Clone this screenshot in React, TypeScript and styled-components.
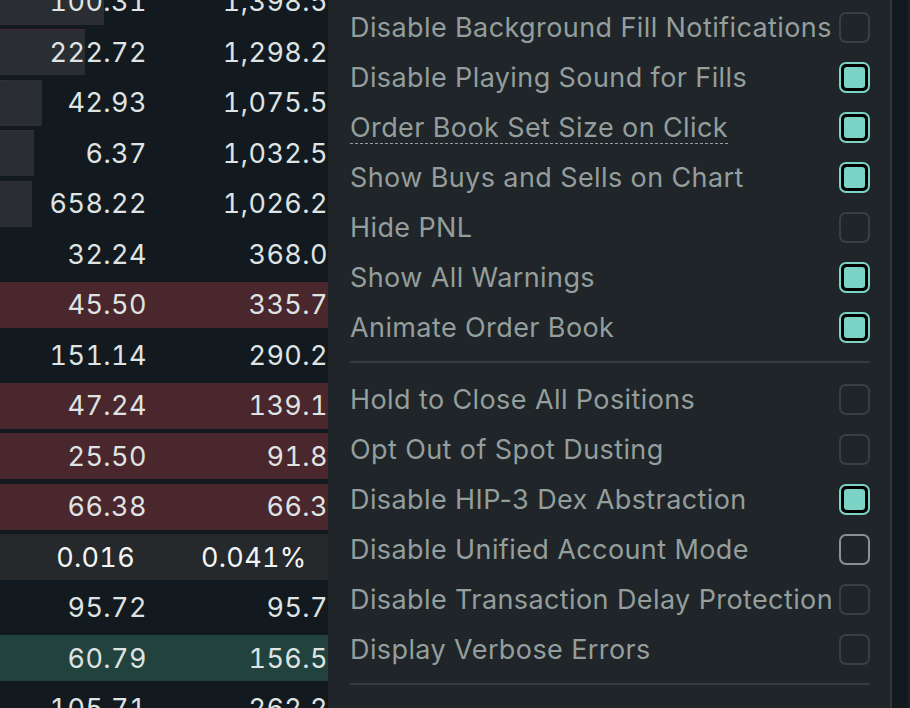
import styled, { createGlobalStyle } from 'styled-components';

const GlobalStyle = createGlobalStyle`
    html, body {
        margin: 0;
        padding: 0;
        background-color: #121a1f;
    }
    #root {
        height: 708px;
        overflow: hidden;
    }
`;

type Side = 'ask' | 'bid' | 'plain';

interface BookRow {
    price: string;
    size: string;
    side: Side;
    depth?: number;
}

const rows: BookRow[] = [
    { price: '100.31', size: '1,398.5', side: 'plain', depth: 104 },
    { price: '222.72', size: '1,298.2', side: 'plain', depth: 85 },
    { price: '42.93', size: '1,075.5', side: 'plain', depth: 42 },
    { price: '6.37', size: '1,032.5', side: 'plain', depth: 34 },
    { price: '658.22', size: '1,026.2', side: 'plain', depth: 32 },
    { price: '32.24', size: '368.0', side: 'plain' },
    { price: '45.50', size: '335.7', side: 'ask' },
    { price: '151.14', size: '290.2', side: 'plain' },
    { price: '47.24', size: '139.1', side: 'ask' },
    { price: '25.50', size: '91.8', side: 'ask' },
    { price: '66.38', size: '66.3', side: 'ask' },
];

const bidRows: BookRow[] = [
    { price: '95.72', size: '95.7', side: 'plain' },
    { price: '60.79', size: '156.5', side: 'bid' },
    { price: '105.71', size: '262.2', side: 'plain' },
];

interface Setting {
    label: string;
    checked: boolean;
    dotted?: boolean;
    focused?: boolean;
}

const displaySettings: Setting[] = [
    { label: 'Disable Background Fill Notifications', checked: false },
    { label: 'Disable Playing Sound for Fills', checked: true },
    { label: 'Order Book Set Size on Click', checked: true, dotted: true },
    { label: 'Show Buys and Sells on Chart', checked: true },
    { label: 'Hide PNL', checked: false },
    { label: 'Show All Warnings', checked: true },
    { label: 'Animate Order Book', checked: true },
];

const accountSettings: Setting[] = [
    { label: 'Hold to Close All Positions', checked: false },
    { label: 'Opt Out of Spot Dusting', checked: false },
    { label: 'Disable HIP-3 Dex Abstraction', checked: true },
    { label: 'Disable Unified Account Mode', checked: false, focused: true },
    { label: 'Disable Transaction Delay Protection', checked: false },
    { label: 'Display Verbose Errors', checked: false },
];

const BookLine = ({ row }: { row: BookRow }) => (
    <Row>
        <RowFill $side={row.side}>
            {row.depth ? <DepthBar style={{ width: row.depth }} /> : null}
        </RowFill>
        <Price>{row.price}</Price>
        <Size>{row.size}</Size>
    </Row>
);

const SettingRow = ({ item }: { item: Setting }) => (
    <OptionRow>
        <Label $dotted={item.dotted}>{item.label}</Label>
        <Box $checked={item.checked} $focused={item.focused}>
            {item.checked ? <Tick /> : null}
        </Box>
    </OptionRow>
);

const App = () => {
    return (
        <>
            <GlobalStyle />
            <Page>
                <OrderBook>
                    {rows.map((r) => <BookLine key={r.price} row={r} />)}
                    <SpreadRow>
                        <SpreadPrice>0.016</SpreadPrice>
                        <SpreadPercent>0.041%</SpreadPercent>
                    </SpreadRow>
                    {bidRows.map((r) => <BookLine key={r.price} row={r} />)}
                </OrderBook>
                <Panel>
                    {displaySettings.map((s) => <SettingRow key={s.label} item={s} />)}
                    <Divider />
                    {accountSettings.map((s) => <SettingRow key={s.label} item={s} />)}
                    <Divider />
                </Panel>
                <ScrollTrack />
            </Page>
        </>
    );
};

const Page = styled.div`
    display: flex;
    width: 910px;
    height: 708px;
    overflow: hidden;
    background-color: #121a1f;
    font-family: Inter, "Liberation Sans", sans-serif;
`;

const OrderBook = styled.div`
    width: 328px;
    flex-shrink: 0;
    display: flex;
    flex-direction: column;
    margin-top: -23.75px;
    overflow: hidden;
`;

const Row = styled.div`
    position: relative;
    height: 50.5px;
    flex-shrink: 0;
    display: flex;
    align-items: center;
    font-size: 27px;
    font-feature-settings: "tnum";
    letter-spacing: 0.45px;
    color: #dfe3e3;
`;

const fills: Record<Side, string> = {
    ask: '#4a262d',
    bid: '#22433d',
    plain: 'transparent',
};

const RowFill = styled.div<{ $side: Side }>`
    position: absolute;
    left: 0;
    right: 0;
    top: 2.25px;
    bottom: 2.25px;
    background-color: ${(p) => fills[p.$side]};
`;

const DepthBar = styled.div`
    height: 100%;
    background-color: #2a2e33;
    border-top: 1px dotted #4a2a30;
    box-sizing: border-box;
`;

const Price = styled.span`
    position: relative;
    width: 147px;
    text-align: right;
`;

const Size = styled.span`
    position: relative;
    width: 181px;
    text-align: right;
    white-space: nowrap;
`;

const SpreadRow = styled.div`
    height: 50.5px;
    flex-shrink: 0;
    display: flex;
    align-items: center;
    box-sizing: border-box;
    padding: 2.25px 0;
    background-clip: content-box;
    background-color: #25292c;
    font-size: 27px;
    font-feature-settings: "tnum";
    letter-spacing: 0.3px;
    color: #f4f6f6;
`;

const SpreadPrice = styled.span`
    width: 135px;
    text-align: right;
`;

const SpreadPercent = styled.span`
    margin-left: 66px;
    white-space: nowrap;
`;

const Panel = styled.div`
    width: 520px;
    flex-shrink: 0;
    padding: 2px 20px 0 22px;
    background-color: #1f2528;
    border-right: 2px solid #32373b;
    display: flex;
    flex-direction: column;
`;

const OptionRow = styled.div`
    height: 50px;
    flex-shrink: 0;
    display: flex;
    align-items: center;
    justify-content: space-between;
`;

const Label = styled.span<{ $dotted?: boolean }>`
    font-size: 27px;
    letter-spacing: 0.4px;
    color: #949e9c;
    white-space: nowrap;
    text-decoration: ${(p) => (p.$dotted ? 'underline dashed #949e9c' : 'none')};
    text-decoration-thickness: 1px;
    text-underline-offset: 6px;
`;

const Box = styled.div<{ $checked: boolean; $focused?: boolean }>`
    width: 31px;
    height: 31px;
    flex-shrink: 0;
    box-sizing: border-box;
    border-radius: 7px;
    border: 2px solid
        ${(p) => (p.$checked ? '#7ad3c5' : p.$focused ? '#8a9193' : '#3a3f43')};
    background-color: ${(p) => (p.$checked ? '#000000' : 'transparent')};
    display: flex;
    align-items: center;
    justify-content: center;
`;

const Tick = styled.div`
    width: 21px;
    height: 21px;
    border-radius: 3px;
    background-color: #7ad3c5;
`;

const Divider = styled.div`
    height: 2px;
    flex-shrink: 0;
    margin: 9px 0 11px;
    background-color: #373c40;
`;

const ScrollTrack = styled.div`
    width: 16px;
    flex-shrink: 0;
    background-color: #121a1f;
    border-right: 2px solid #1c2227;
`;

export default App;
